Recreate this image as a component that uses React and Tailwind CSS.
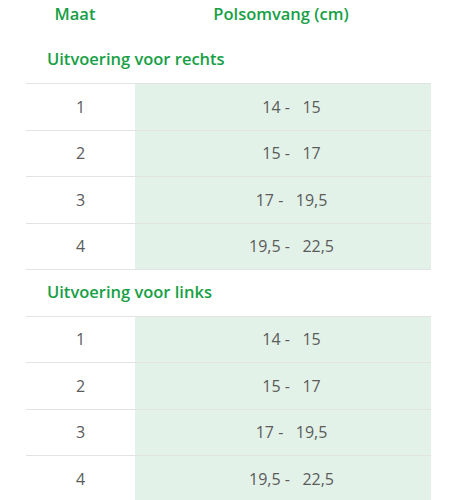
import React from "react";

const rows = [
  ["1", "14 -   15"],
  ["2", "15 -   17"],
  ["3", "17 -   19,5"],
  ["4", "19,5 -   22,5"],
];

function Section({ title }) {
  return (
    <>
      <div className="h-[46.5px] flex items-center border-t border-[#e3e3e3] first:border-t-0 pl-[21px] text-[16.5px] font-semibold text-[#17a046]">
        {title}
      </div>
      {rows.map(([a, b]) => (
        <div key={a} className="h-[46.5px] flex border-t border-[#e3e3e3] text-[16px] text-[#5b5b5b]">
          <div className="w-[109px] flex items-center justify-center">{a}</div>
          <div className="flex-1 flex items-center justify-center bg-[#e3f2e8] pl-[17px] whitespace-pre">{b}</div>
        </div>
      ))}
    </>
  );
}

export default function App() {
  return (
    <div className="w-[451px] h-[500px] overflow-hidden bg-white" style={{ fontFamily: '"Open Sans", sans-serif' }}>
      <div className="h-[36.5px] pb-[7px] flex items-center text-[16.5px] font-semibold text-[#17a046]">
        <div className="ml-[26px] w-[98px] text-center">Maat</div>
        <div className="w-[314px] text-center">Polsomvang (cm)</div>
      </div>
      <div className="ml-[26px] w-[405px] flex flex-col">
        <Section title="Uitvoering voor rechts" />
        <Section title="Uitvoering voor links" />
      </div>
    </div>
  );
}
